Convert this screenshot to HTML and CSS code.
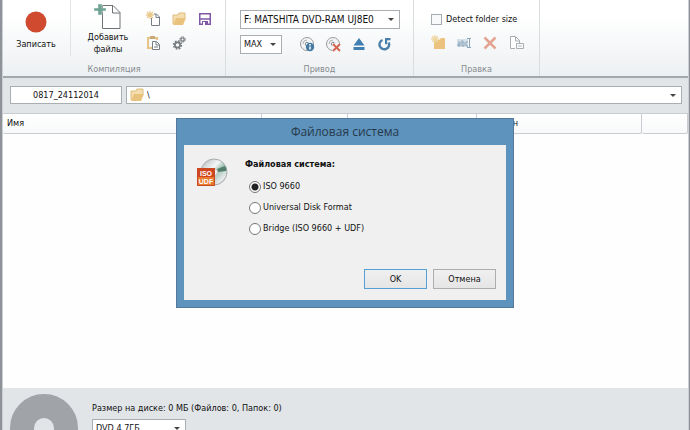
FILE: index.html
```html
<!DOCTYPE html>
<html lang="ru">
<head>
<meta charset="utf-8">
<title>Файловая система</title>
<link rel="stylesheet" href="styles.css">
</head>
<body>
<main class="window">
  <header class="ribbon">
    <section class="group compile">
      <div class="tools">
        <button class="big record"><svg width="22" height="22" viewBox="0 0 22 22"><circle cx="11" cy="11" r="10.5" fill="#d04a30"/></svg><span>Записать</span></button>
        <i class="divider"></i>
        <button class="big add"><svg width="28" height="30" viewBox="0 0 28 30"><path d="M8.500 5.500H19l7 7v16H8.500z" fill="#fff" stroke="#6e7377"/><path d="M18.500 5.500v7.500H26" fill="none" stroke="#6e7377"/><path d="M4 4h4v4h4v3H8v4H4v-4H0V8h4z" fill="#6fa393" stroke="#eef3f2" stroke-width=".5"/></svg><span>Добавить<br>файлы</span></button>
        <div class="icons three">
          <button aria-label="Новый"><svg viewBox="0 0 16 16"><path d="M5.500 7v7.500h8V6l-3-3H8" fill="#fff" stroke="#777d83"/><path d="M10 3v3.500h3.500" fill="none" stroke="#777d83"/><path d="M4 0v8M0 4h8M1 1l6 6M7 1L1 7" stroke="#eac98d" stroke-width="1.300"/></svg></button>
          <button aria-label="Открыть"><svg viewBox="0 0 16 16"><path d="M1 13V4h5l1-2h6v5" fill="#f4deb0" stroke="#dfbd7c"/><path d="M1 14l3-7h10l-3 7z" fill="#e9c37d"/></svg></button>
          <button aria-label="Сохранить"><svg viewBox="0 0 16 16"><path d="M1.750 2.750h10.500v10.500H1.750z" fill="#fff" stroke="#8058a5" stroke-width="1.500"/><path d="M2 8h10" stroke="#8058a5" stroke-width="1.500"/><path d="M4 14v-4h6v4z" fill="#8058a5"/><path d="M5 11h2v3H5z" fill="#fff"/></svg></button>
          <button aria-label="Вставить"><svg viewBox="0 0 16 16"><path d="M6 13H2V3h9v2" fill="none" stroke="#e5c486" stroke-width="2"/><path d="M4 1h5v3H4z" fill="#c9a978"/><path d="M6.500 6.500h4l3 3v5h-7z" fill="#fff" stroke="#777d83"/><path d="M10 7v3h3M8 12h4" fill="none" stroke="#777d83"/></svg></button>
          <button aria-label="Настройки"><svg viewBox="0 0 16 16"><g fill="none" stroke="#74797e"><circle cx="5.500" cy="10" r="2.600" stroke-width="1.700"/><circle cx="5.500" cy="10" r="4" stroke-width="1.400" stroke-dasharray="1.700 1.440"/><circle cx="10.500" cy="4.500" r="1.700" stroke-width="1.300"/><circle cx="10.500" cy="4.500" r="2.800" stroke-dasharray="1.300 .900"/></g></svg></button>
        </div>
      </div>
      <h2>Компиляция</h2>
    </section>
    <section class="group drive">
      <div class="tools stack">
        <span class="combo wide"><select aria-label="Привод"><option>F: MATSHITA DVD-RAM UJ8E0</option></select><i class="arrow"></i></span>
        <div class="line">
          <span class="combo speed"><select aria-label="Скорость"><option>MAX</option></select><i class="arrow"></i></span>
          <div class="icons">
            <button aria-label="О диске"><svg viewBox="0 0 16 16"><circle cx="7" cy="7" r="6.500" fill="#f3f4f5" stroke="#969b9f"/><path d="M3 7a4 4 0 0 1 4-4" fill="none" stroke="#b1b5b8"/><circle cx="7" cy="7" r="1.700" fill="#fff" stroke="#858b90"/><circle cx="10" cy="10" r="4.200" fill="#447ba3"/><path d="M10 7v1.500m0 1v3" stroke="#fff" stroke-width="1.500"/></svg></button>
            <button aria-label="Стереть"><svg viewBox="0 0 16 16"><circle cx="7" cy="7" r="6.500" fill="#f3f4f5" stroke="#969b9f"/><path d="M3 7a4 4 0 0 1 4-4" fill="none" stroke="#b1b5b8"/><circle cx="7" cy="7" r="1.700" fill="#fff" stroke="#858b90"/><path d="M7 7l7 7m0-7l-7 7" stroke="#fff" stroke-width="3"/><path d="M7 7l7 7m0-7l-7 7" stroke="#d66552" stroke-width="2"/></svg></button>
            <button aria-label="Извлечь"><svg viewBox="0 0 16 16"><path d="M7 1l5.500 7.500h-11zM1.500 10h11v3h-11z" fill="#417eb2"/></svg></button>
            <button aria-label="Обновить"><svg viewBox="0 0 16 16"><path d="M4.500 3A4.800 4.800 0 1 0 10.700 5.500" fill="none" stroke="#4a7faa" stroke-width="2.400"/><path d="M7 1h5.500v2.200H9.200v4H7z" fill="#4a7faa"/></svg></button>
          </div>
        </div>
      </div>
      <h2>Привод</h2>
    </section>
    <section class="group edit">
      <div class="tools stack">
        <label class="check"><input type="checkbox">Detect folder size</label>
        <div class="icons">
          <button disabled aria-label="Новая папка"><svg viewBox="0 0 16 16"><path d="M3 5h5l2-2h4v11H3z" fill="#ebc37f"/><path d="M4 0v8M0 4h8M1 1l6 6M7 1L1 7" stroke="#efd7a2" stroke-width="1.300"/></svg></button>
          <button disabled aria-label="Переименовать"><svg viewBox="0 0 16 16"><path d="M0 4h11v8H0z" fill="#d5e0e9"/><path d="M1 7h2v4H1V9h2M5 5v6h2V7H5M11 7H9v4h2" fill="none" stroke="#8ba6bb"/><path d="M10 3.500h4M12.500 4v9M10 12.500h4" stroke="#8ba6bb"/></svg></button>
          <button disabled aria-label="Удалить"><svg viewBox="0 0 16 16"><path d="M1.500 2.500l11 11m0-11l-11 11" stroke="#e5a491" stroke-width="2.500"/></svg></button>
          <button disabled aria-label="Свойства"><svg viewBox="0 0 16 16"><path d="M6 13.500H1.500v-12h5l4 4V8" fill="#fff" stroke="#a9aeb2"/><path d="M6.500 2v4h4" fill="none" stroke="#a9aeb2"/><path d="M7.500 8.500h7v5h-7z" fill="#fafbfc" stroke="#a9aeb2"/><path d="M9 11h4" stroke="#b9bdc0"/></svg></button>
        </div>
      </div>
      <h2>Правка</h2>
    </section>
  </header>
  <div class="address">
    <input class="volume" aria-label="Имя диска" value="0817_24112014">
    <div class="path"><svg width="16" height="16" viewBox="0 0 16 16"><path d="M1 13V4h5l1-2h6v5" fill="#f4deb0" stroke="#dfbd7c"/><path d="M1 14l3-7h10l-3 7z" fill="#e9c37d"/></svg>
      <span class="combo"><select aria-label="Путь"><option>\</option></select><i class="arrow"></i></span></div>
  </div>
  <div class="list">
    <table>
      <colgroup><col class="c-name"><col class="c-size"><col class="c-type"><col class="c-date"><col></colgroup>
      <thead><tr><th>Имя</th><th></th><th></th><th>Изменен</th><th></th></tr></thead>
    </table>
  </div>
  <footer class="status">
    <svg class="disc" width="68" height="68" viewBox="0 0 68 68"><circle cx="34" cy="34" r="22" fill="none" stroke="#a0a4a8" stroke-width="24"/></svg>
    <div class="usage">
      <p>Размер на диске: 0 МБ (Файлов: 0, Папок: 0)</p>
      <span class="combo media"><select aria-label="Тип диска"><option>DVD 4.7ГБ</option></select><i class="arrow"></i></span>
    </div>
  </footer>
</main>
<div class="overlay">
  <form class="dialog" role="dialog" aria-labelledby="dialog-title">
    <h1 id="dialog-title">Файловая система</h1>
    <div class="panel">
      <svg class="iso" width="32" height="30" viewBox="0 0 32 30">
        <defs><linearGradient id="shine" x1="0" y1="0" x2="1" y2="1"><stop offset="0" stop-color="#aeb3b4"/><stop offset=".4" stop-color="#f5f8f8"/><stop offset=".55" stop-color="#a6c5b7"/><stop offset=".8" stop-color="#e8eaeb"/><stop offset="1" stop-color="#999fa3"/></linearGradient></defs>
        <circle cx="18" cy="14" r="13" fill="url(#shine)" stroke="#a7acae"/>
        <path d="M21 11l8-3q2 3 1 5l-8 1z" fill="#527e6c"/>
        <circle cx="18" cy="14" r="3.500" fill="#eee" stroke="#c0c4c5"/>
        <path d="M1 10h18v9H1z" fill="#cf4520"/><path d="M1 19h18v9H1z" fill="#e8792e"/><path d="M1.500 10.500h17v17h-17z" fill="none" stroke="#c84a20"/>
        <g class="iso-text" text-anchor="middle"><text x="10" y="18">ISO</text><text x="10" y="26">UDF</text></g>
      </svg>
      <fieldset>
        <legend>Файловая система:</legend>
        <label><input type="radio" name="fs" checked>ISO 9660</label>
        <label><input type="radio" name="fs">Universal Disk Format</label>
        <label><input type="radio" name="fs">Bridge (ISO 9660 + UDF)</label>
      </fieldset>
      <div class="actions"><button type="button" class="primary">OK</button><button type="button">Отмена</button></div>
    </div>
  </form>
</div>
</body>
</html>
```
FILE: styles.css
```css
* { box-sizing: border-box; }
body {
  margin: 0;
  height: 100vh;
  overflow: hidden;
  background: #8f9299;
  font: 9px/13px "DejaVu Sans Condensed", "DejaVu Sans", sans-serif;
  color: #111;
}
button, input, select { font: inherit; color: inherit; margin: 0; }
button { border: 0; padding: 0; background: none; }
svg { display: block; }

.window {
  display: flex;
  flex-direction: column;
  height: 100vh;
  margin: 0 1px 0 2px;
  border: solid #cbd0d4;
  border-width: 0 1px;
  background: #e1e5e8;
}
.ribbon {
  display: flex;
  flex: none;
  height: 78px;
  border-bottom: 2px solid #a2a8ae;
  background: linear-gradient(#fff 20%, #edf0f2);
}
.group {
  display: flex;
  flex-direction: column;
  justify-content: space-between;
  border-right: 1px solid #d9dde0;
}
.group h2 {
  margin: 0;
  font-size: 9px;
  font-weight: normal;
  text-align: center;
  color: #868b90;
}
.compile { width: 223px; }
.drive { width: 188px; }
.edit { width: 126px; }
.tools { display: flex; }
.stack { flex-direction: column; gap: 6px; padding: 10px 13px 0; }
.line { display: flex; gap: 18px; }
.big { display: flex; flex-direction: column; align-items: center; }
.record { width: 66px; padding-top: 11px; gap: 5px; }
.add { width: 72px; gap: 1px; line-height: 12px; }
.divider { width: 1px; height: 56px; margin: 0 1px; background: #e1e4e7; }
.icons { display: flex; gap: 10px; align-items: center; }
.icons svg { width: 16px; height: 16px; }
.three {
  display: grid;
  grid-template-columns: repeat(3, 16px);
  align-content: start;
  gap: 8px 10px;
  padding: 11px 0 0 2px;
}
.edit .stack { padding: 13px 0 0 17px; gap: 9px; }
.drive .stack { padding-left: 14px; }
.check { display: flex; align-items: center; gap: 4px; }
.check input {
  appearance: none;
  width: 11px;
  height: 11px;
  border: 1px solid #a6abb0;
  background: #f8f9fa;
}

.combo {
  display: grid;
  height: 19px;
  border: 1px solid #a9aeb3;
  background: #fff;
}
.combo > * { grid-area: 1 / 1; }
.combo select {
  appearance: none;
  width: 100%;
  min-width: 0;
  border: 0;
  padding: 0 3px;
  background: none;
}
.arrow {
  place-self: center end;
  margin-right: 5px;
  border: solid transparent;
  border-width: 3px 3px 0;
  border-top-color: #444;
  pointer-events: none;
}
.wide { width: 160px; font-size: 10px; }
.speed { width: 42px; }
.media { width: 94px; }

.address { display: flex; gap: 4px; padding: 8px 6px 9px 7px; }
.volume {
  width: 112px;
  height: 18px;
  border: 1px solid #a9aeb3;
  padding: 0;
  text-align: center;
}
.path {
  display: flex;
  flex: 1;
  align-items: center;
  height: 18px;
  padding-left: 3px;
  border: 1px solid #a9aeb3;
  background: #fff;
}
.path .combo { flex: 1; height: 16px; border: 0; }
.path select { padding-left: 1px; }

.list { flex: 1; background: #fefefe; }
table { width: 100%; border-spacing: 0; table-layout: fixed; }
.c-name { width: 259px; }
.c-size { width: 86px; }
.c-type { width: 129px; }
.c-date { width: 165px; }
th {
  height: 21px;
  padding: 0 4px;
  border: solid #c9cdd1;
  border-width: 1px 1px 1px 0;
  border-radius: 0 0 2px 2px;
  background: linear-gradient(#fff, #f8f9fa);
  font-weight: normal;
  text-align: left;
}

.status {
  display: flex;
  flex: none;
  gap: 14px;
  height: 42px;
  padding: 6px 7px 0;
  overflow: hidden;
}
.disc { flex: none; }
.usage p { margin: 8px 0 4px; }

.overlay {
  position: absolute;
  inset: 0;
  display: grid;
  place-items: center;
  padding-bottom: 4px;
}
.dialog {
  width: 338px;
  padding: 0 7px 7px;
  border: 1px solid #54799a;
  background: #5e93bd;
}
.dialog h1 {
  margin: 0;
  font: 12px/26px "Open Sans", sans-serif;
  text-align: center;
  color: #26394b;
}
.panel {
  display: grid;
  grid-template-columns: 32px 1fr;
  gap: 34px 17px;
  padding: 13px 10px 11px 12px;
  background: #f0f0f0;
}
.iso-text { fill: #fff; font: bold 7px "Liberation Sans", sans-serif; }
fieldset {
  display: flex;
  flex-direction: column;
  gap: 8px;
  margin: 0;
  border: 0;
  padding: 0;
}
legend { padding: 0; margin-bottom: 9px; font-weight: bold; }
fieldset label { display: flex; align-items: center; gap: 2px; margin-left: 4px; }
fieldset input {
  appearance: none;
  width: 12px;
  height: 12px;
  border: 1px solid #777;
  border-radius: 50%;
  background: #fff;
}
fieldset input:checked { background: radial-gradient(circle, #222 3px, #fff 4px); }
.actions {
  grid-column: 1 / -1;
  display: flex;
  justify-content: flex-end;
  gap: 6px;
}
.actions button {
  width: 63px;
  height: 20px;
  border: 1px solid #adadad;
  background: linear-gradient(#f0f0f0, #e5e5e5);
}
.actions .primary { border-color: #55a0d5; }
```
